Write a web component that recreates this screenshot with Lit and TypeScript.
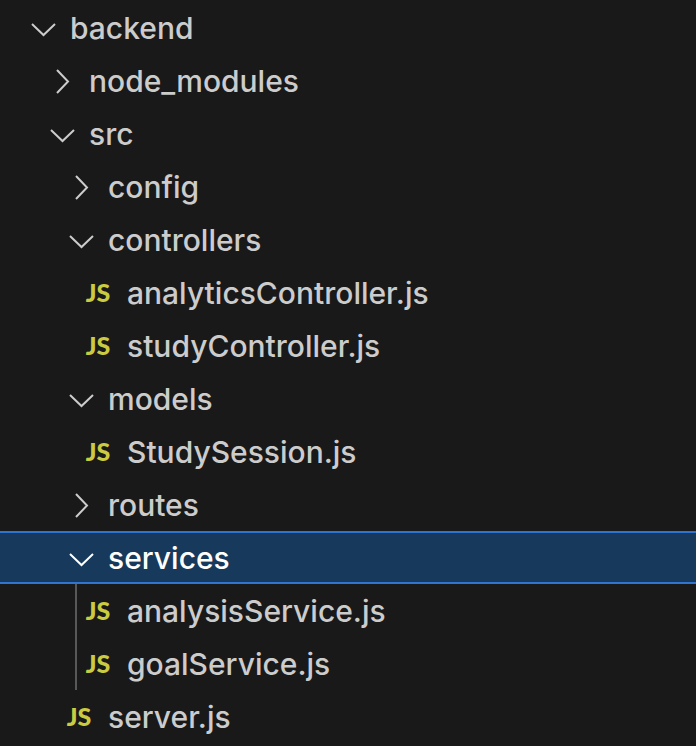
import { LitElement, html, css, svg, nothing, type TemplateResult } from "lit";
import { customElement, state } from "lit/decorators.js";
import { classMap } from "lit/directives/class-map.js";
import { styleMap } from "lit/directives/style-map.js";

interface TreeNode {
  name: string;
  open?: boolean;
  children?: TreeNode[];
}

const INDENT = 19;
const BASE = 27;

const TREE: TreeNode[] = [
  {
    name: "backend",
    open: true,
    children: [
      { name: "node_modules", children: [] },
      {
        name: "src",
        open: true,
        children: [
          { name: "config", children: [] },
          {
            name: "controllers",
            open: true,
            children: [{ name: "analyticsController.js" }, { name: "studyController.js" }],
          },
          { name: "models", open: true, children: [{ name: "StudySession.js" }] },
          { name: "routes", children: [] },
          {
            name: "services",
            open: true,
            children: [{ name: "analysisService.js" }, { name: "goalService.js" }],
          },
          { name: "server.js" },
        ],
      },
    ],
  },
];

const chevronDown = svg`<path d="M5 12 L16.500 23 L28 12" />`;
const chevronRight = svg`<path d="M11 5 L22 16.500 L11 28" />`;

@customElement("app-root")
export class AppRoot extends LitElement {
  static styles = css`
    :host {
      display: block;
      min-height: 100vh;
      box-sizing: border-box;
      padding-top: 1px;
      background: #191919;
      color: #cccccc;
      font-family: Inter, "Liberation Sans", sans-serif;
      font-size: 30px;
      font-weight: 500;
    }
    ul {
      list-style: none;
      margin: 0;
      padding: 0;
    }
    .group {
      position: relative;
    }
    .guided::before {
      content: "";
      position: absolute;
      top: 0;
      bottom: 0;
      left: 75px;
      width: 2px;
      background: #585858;
    }
    .row {
      display: flex;
      align-items: center;
      gap: 11px;
      width: 100%;
      height: 53px;
      box-sizing: border-box;
      margin: 0;
      padding: 0;
      border: 0 solid #2f74d0;
      background: none;
      color: inherit;
      font: inherit;
      text-align: left;
      white-space: nowrap;
      cursor: pointer;
      outline: none;
    }
    .selected {
      border-width: 2px 0;
      background: #17395c;
      color: #ffffff;
    }
    .icon {
      flex: none;
      width: 32px;
      height: 32px;
    }
    .chevron {
      fill: none;
      stroke: currentColor;
      stroke-width: 2;
    }
    .js {
      box-sizing: border-box;
      padding-right: 4px;
      color: #cbcb41;
      font: 900 25px/30px Lato, sans-serif;
      text-align: center;
    }
  `;

  @state() private selected = "services";

  private activate(node: TreeNode) {
    this.selected = node.name;
    if (node.children) node.open = !node.open;
    this.requestUpdate();
  }

  private renderNode(node: TreeNode, level: number): TemplateResult {
    const isSelected = node.name === this.selected;
    const isFolder = node.children !== undefined;
    return html`<li role="none">
      <button
        class=${classMap({ row: true, selected: isSelected })}
        style=${styleMap({ paddingLeft: `${BASE + level * INDENT}px` })}
        role="treeitem"
        aria-level=${level + 1}
        aria-selected=${isSelected}
        aria-expanded=${isFolder ? String(!!node.open) : nothing}
        @click=${() => this.activate(node)}
      >
        ${isFolder
          ? html`<svg class="icon chevron" viewBox="0 0 32 32" aria-hidden="true">
              ${node.open ? chevronDown : chevronRight}
            </svg>`
          : html`<span class="icon js" aria-hidden="true">JS</span>`}
        <span>${node.name}</span>
      </button>
      ${node.open && node.children?.length
        ? html`<ul class=${classMap({ group: true, guided: isSelected })} role="group">
            ${node.children.map((child) => this.renderNode(child, level + 1))}
          </ul>`
        : nothing}
    </li>`;
  }

  render() {
    return html`<ul role="tree" aria-label="Files">
      ${TREE.map((node) => this.renderNode(node, 0))}
    </ul>`;
  }
}
